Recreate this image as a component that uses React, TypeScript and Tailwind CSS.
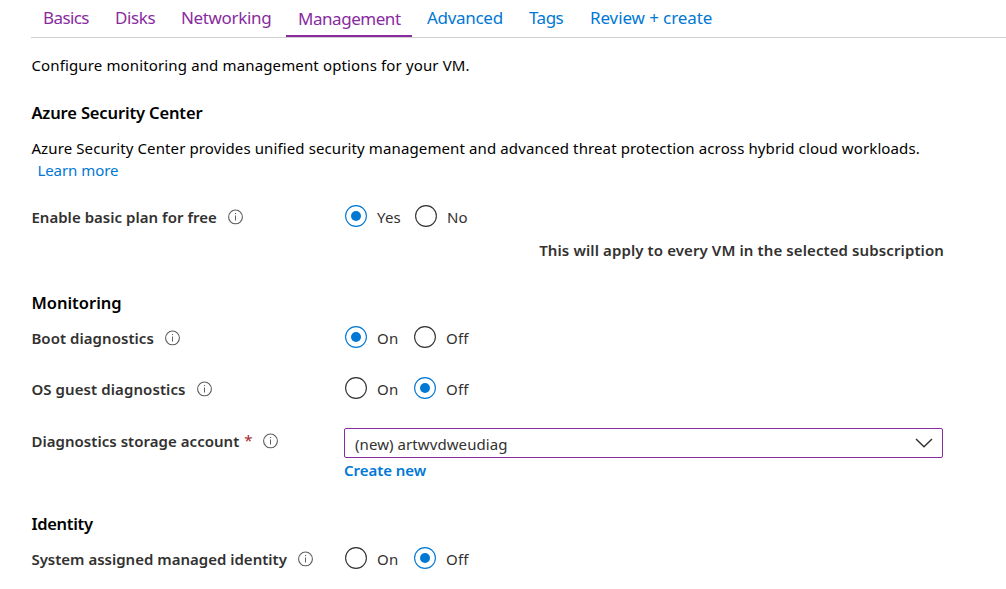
import type { ReactNode } from "react";

const tabs = [
  { label: "Basics", box: "w-[72px] text-[#892ba0]", text: "tracking-[-0.6px]" },
  { label: "Disks", box: "w-[66px] text-[#892ba0]", text: "tracking-[-0.4px]" },
  { label: "Networking", box: "w-[117px] text-[#892ba0]", text: "tracking-[-0.35px]" },
  { label: "Management", box: "w-[126px] pt-px border-b-2 border-[#892ba0] text-[#892ba0]", text: "tracking-[-0.46px]" },
  { label: "Advanced", box: "ml-[3px] w-[102px] text-[#0078d4]", text: "tracking-[-0.3px]" },
  { label: "Tags", box: "w-[61px] text-[#0078d4]", text: "tracking-[-0.5px]" },
  { label: "Review + create", box: "text-[#0078d4]", text: "tracking-[-0.1px]" },
];

function InfoIcon() {
  return (
    <svg className="mt-0.5 h-4 w-4 shrink-0" viewBox="0 0 16 16" fill="none" stroke="#605e5c">
      <circle cx="7.5" cy="7.9" r="6.9" strokeWidth="1.1" />
      <path d="M7.5 6.5V11.5" strokeWidth="1" />
      <path d="M7.5 4V5.1" strokeWidth="1.1" />
    </svg>
  );
}

function Radio({ label, checked, className = "" }: { label: string; checked?: boolean; className?: string }) {
  return (
    <label className={`flex items-center gap-2.5 ${className}`}>
      <svg className="h-[22px] w-[22px] shrink-0" viewBox="0 0 22 22" fill="none">
        <circle cx="11" cy="11" r="10.4" stroke={checked ? "#0078d4" : "#323130"} strokeWidth="1.1" />
        {checked && <circle cx="11" cy="11" r="5" fill="#0078d4" />}
      </svg>
      <span className="pt-0.5 tracking-[0.2px]">{label}</span>
    </label>
  );
}

function Row({ label, tracking, required, className = "", children }: {
  label: string; tracking: string; required?: boolean; className?: string; children: ReactNode;
}) {
  return (
    <div className={`flex h-[22px] items-center ${className}`}>
      <div className="flex w-[313px] items-center">
        <span className={`pt-0.5 pl-[0.4px] font-semibold ${tracking}`}>{label}</span>
        {required && <span className="ml-[5px] w-2 text-[15px] text-[#a4262c]">*</span>}
        <span className="ml-[11px]"><InfoIcon /></span>
      </div>
      {children}
    </div>
  );
}

function OnOff({ value }: { value: "On" | "Off" }) {
  return (
    <div className="ml-px flex">
      <Radio label="On" checked={value === "On"} className="w-[69px]" />
      <Radio label="Off" checked={value === "Off"} />
    </div>
  );
}

export default function App() {
  return (
    <main className="h-[589px] w-full overflow-hidden bg-white pl-[31px] font-['Noto_Sans','Segoe_UI',sans-serif] text-[15px] leading-5 text-[#323130]">
      <nav className="flex h-[38px] border-b border-[#d2d0ce] text-[17px]">
        {tabs.map((t) => (
          <a key={t.label} className={`h-[37px] shrink-0 pl-3 whitespace-nowrap ${t.box}`}>
            <span className={`mt-2 block ${t.text}`}>{t.label}</span>
          </a>
        ))}
      </nav>

      <p className="mt-[17px] pl-[0.4px] tracking-[0.14px] text-black">Configure monitoring and management options for your VM.</p>

      <h2 className="mt-[27px] pl-[0.4px] text-[16.5px] leading-[22px] font-semibold tracking-[-0.14px] text-black">Azure Security Center</h2>
      <p className="mt-[13px] pl-[0.4px] leading-[22px] tracking-[0.117px] whitespace-nowrap text-black">
        Azure Security Center provides unified security management and advanced threat protection across hybrid cloud workloads.
        <br />
        <a className="ml-1.5 tracking-[-0.05px] text-[#0078d4]">Learn more</a>
      </p>

      <Row label="Enable basic plan for free" tracking="tracking-[0.03px]" className="mt-6">
        <div className="ml-px flex">
          <Radio label="Yes" checked className="w-[70px]" />
          <Radio label="No" />
        </div>
      </Row>
      <p className="mt-[13px] w-[913px] text-right font-semibold tracking-[0.107px]">
        This will apply to every VM in the selected subscription
      </p>

      <h2 className="mt-8 pl-[0.4px] text-[16.5px] leading-[22px] font-semibold text-black">Monitoring</h2>
      <Row label="Boot diagnostics" tracking="tracking-[0.05px]" className="mt-3">
        <OnOff value="On" />
      </Row>
      <Row label="OS guest diagnostics" tracking="tracking-[0.09px]" className="mt-[29px]">
        <OnOff value="Off" />
      </Row>
      <Row label="Diagnostics storage account" tracking="tracking-[0.04px]" required className="mt-[30px]">
        <div className="mt-[5px] flex h-[30px] w-[599px] shrink-0 items-center justify-between rounded-[2px] border border-[#892ba0] pr-[9px] pl-2.5">
          <span className="pt-[3px] tracking-[0.08px]">(new) artwvdweudiag</span>
          <svg className="mt-px h-[10px] w-[18px]" viewBox="0 0 18 10" fill="none" stroke="#323130" strokeWidth="1.4">
            <path d="M1 1L9 8.8L17 1" />
          </svg>
        </div>
      </Row>
      <a className="mt-[9px] ml-[313px] block font-semibold tracking-[-0.05px] text-[#0078d4]">Create new</a>

      <h2 className="mt-[33px] pl-[0.4px] text-[16.5px] leading-[22px] font-semibold tracking-[-0.3px] text-black">Identity</h2>
      <Row label="System assigned managed identity" tracking="" className="mt-3">
        <OnOff value="Off" />
      </Row>
    </main>
  );
}
